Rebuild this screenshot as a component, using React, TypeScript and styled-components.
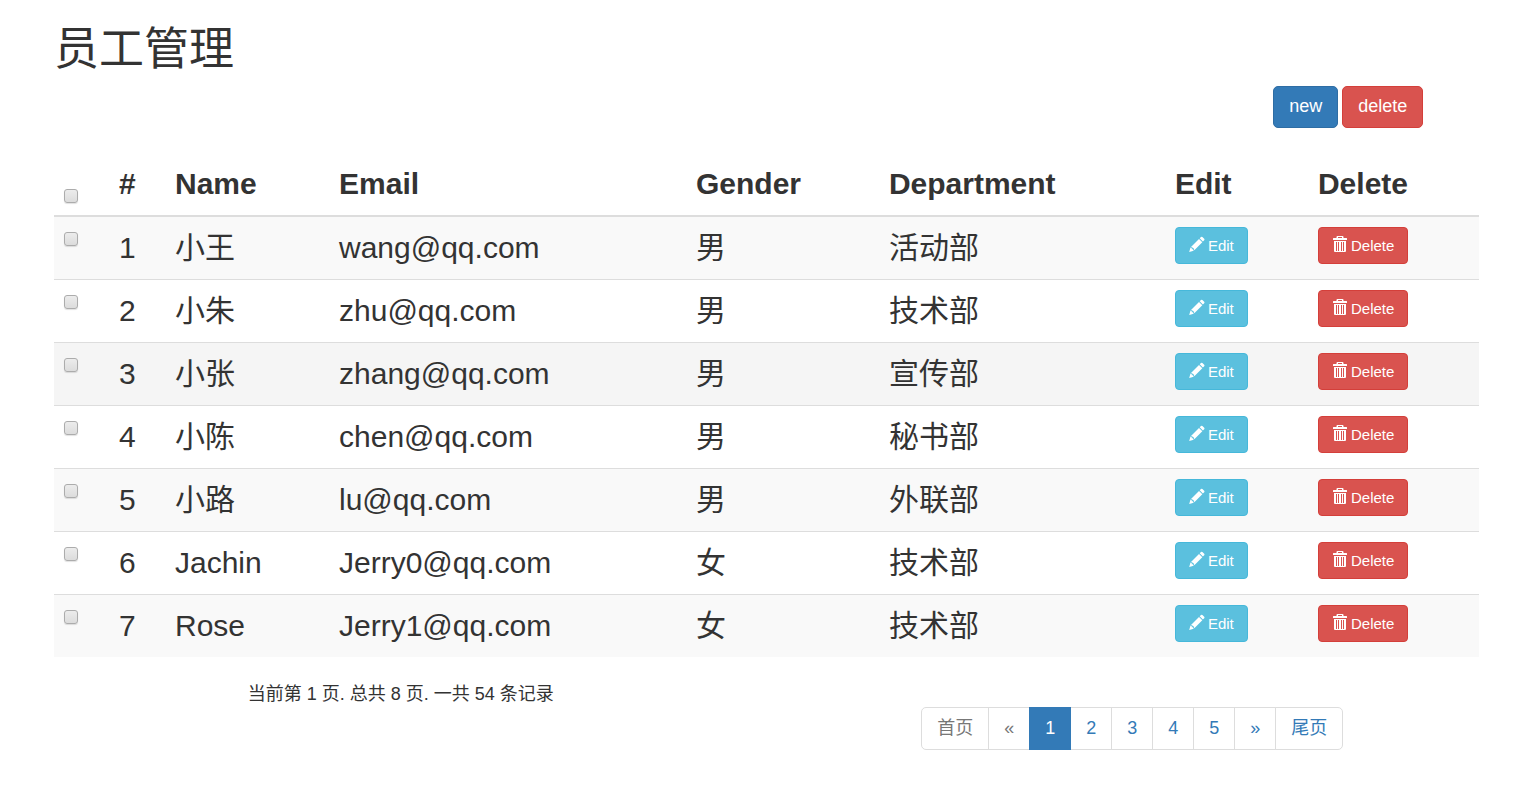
import React from "react";
import styled, { createGlobalStyle, css } from "styled-components";

const GlobalStyle = createGlobalStyle`
  *, *::before, *::after { box-sizing: border-box; }
  body {
    margin: 0;
    background: #fff;
    color: #333;
    font-family: "Liberation Sans", "Noto Sans CJK SC", sans-serif;
    font-size: 18px;
    line-height: 25px;
  }
`;

const Page = styled.main`
  padding: 24px 37px 24px 54px;
`;

const Title = styled.h1`
  margin: 0 0 10px;
  font-size: 45px;
  font-weight: 400;
  line-height: 52px;
`;

const Toolbar = styled.div`
  display: grid;
  grid-template-columns: repeat(12, minmax(0, 1fr));
  column-gap: 38px;
  margin-bottom: 24px;
`;

const ToolbarActions = styled.div`
  grid-column: 11 / span 2;
  display: flex;
  gap: 4px;
`;

const tones = {
  primary: { fill: "#337ab7", edge: "#2e6da4" },
  danger: { fill: "#d9534f", edge: "#d43f3a" },
  info: { fill: "#5bc0de", edge: "#46b8da" },
};

const Button = styled.button<{ $tone: keyof typeof tones; $small?: boolean }>`
  display: flex;
  align-items: center;
  gap: 3px;
  border: 1px solid ${(p) => tones[p.$tone].edge};
  background: ${(p) => tones[p.$tone].fill};
  color: #fff;
  font-family: inherit;
  white-space: nowrap;
  cursor: pointer;
  ${(p) =>
    p.$small
      ? css`
          padding: 6px 13px;
          border-radius: 4px;
          font-size: 15px;
          line-height: 23px;
        `
      : css`
          padding: 7px 15px 8px;
          border-radius: 5px;
          font-size: 18px;
          line-height: 25px;
        `}
`;

const Table = styled.table`
  width: 100%;
  table-layout: fixed;
  border-collapse: separate;
  border-spacing: 0;
  font-size: 30px;
  line-height: 43px;
`;

const Col = styled.col<{ $share: number }>`
  width: ${(p) => p.$share}%;
`;

const HeadCell = styled.th`
  padding: 10px;
  border-bottom: 2px solid #ddd;
  text-align: left;
  vertical-align: bottom;
`;

const Row = styled.tr<{ $hovered?: boolean }>`
  &:nth-child(odd) {
    background: ${(p) => (p.$hovered ? "#f5f5f5" : "#f9f9f9")};
  }
  &:not(:first-child) > td {
    border-top: 1px solid #ddd;
  }
`;

const Cell = styled.td`
  padding: 10px 10px 11px;
  line-height: 41px;
  vertical-align: top;
`;

const Checkbox = styled.input.attrs({ type: "checkbox" })`
  appearance: none;
  display: block;
  width: 14px;
  height: 14px;
  margin: 5px 0 2px;
  border: 1px solid #acacac;
  border-radius: 3px;
  background: linear-gradient(#ececec, #dcdcdc);
  box-shadow: 0 1px 1px rgba(0, 0, 0, 0.12);
  &:checked {
    background: #337ab7;
  }
`;

const Footer = styled.footer`
  display: grid;
  grid-template-columns: 1fr 1fr;
  column-gap: 38px;
  justify-items: center;
  padding-top: 25px;
`;

const Summary = styled.p`
  margin: 0;
`;

const Pagination = styled.ul`
  display: flex;
  margin: 25px 0 0;
  padding: 0;
  list-style: none;
`;

const PageItem = styled.li`
  & + & {
    margin-left: -1px;
  }
  &:first-child > a {
    border-radius: 5px 0 0 5px;
  }
  &:last-child > a {
    border-radius: 0 5px 5px 0;
  }
`;

const PageLink = styled.a<{ $state?: "active" | "disabled" }>`
  display: block;
  position: relative;
  z-index: ${(p) => (p.$state === "active" ? 1 : 0)};
  padding: 8px 15px;
  border: 1px solid ${(p) => (p.$state === "active" ? "#337ab7" : "#ddd")};
  background: ${(p) => (p.$state === "active" ? "#337ab7" : "#fff")};
  color: ${(p) =>
    p.$state === "active" ? "#fff" : p.$state === "disabled" ? "#777" : "#337ab7"};
  text-decoration: none;
`;

const Icon = styled.svg`
  display: block;
  width: 16px;
  height: 16px;
  flex: none;
  fill: currentColor;
  margin-bottom: 3px;
`;

const PencilIcon = () => (
  <Icon viewBox="0 0 16 16" aria-hidden="true">
    <path d="M12 1 Q12.700 0.300 13.400 1 L15.200 2.800 Q15.900 3.500 15.200 4.200 L13.900 5.500 L10.700 2.300 Z" />
    <path d="M10 2.900 L13.300 6.200 L5.300 14.200 L4.700 12.300 L3.700 12.300 L3.600 11.400 L2 10.900 Z" />
    <path d="M1.500 11.500 L2.700 12.100 L2.800 13.200 L4 13.300 L4.700 14.700 L0.200 16 Z" />
  </Icon>
);

const TrashIcon = () => (
  <Icon viewBox="0 0 16 16" aria-hidden="true">
    <path
      fillRule="evenodd"
      d="M5.5 0h5a1 1 0 0 1 1 1v1h3a.5.5 0 0 1 .5.5V4H1V2.500a.5.5 0 0 1 .5-.5h3V1a1 1 0 0 1 1-1zM6 1v1h4V1z"
    />
    <path
      fillRule="evenodd"
      d="M2 5h12v10a1 1 0 0 1-1 1H3a1 1 0 0 1-1-1zM4 6v9h1V6zM6 6v9h1V6zM9 6v9h1V6zM11 6v9h1V6z"
    />
  </Icon>
);

const columnShares = [3.86, 3.93, 11.51, 25.05, 13.54, 20.07, 10.04, 12];
const headings = ["#", "Name", "Email", "Gender", "Department", "Edit", "Delete"];

const employees = [
  { id: 1, name: "小王", email: "wang@qq.com", gender: "男", department: "活动部" },
  { id: 2, name: "小朱", email: "zhu@qq.com", gender: "男", department: "技术部" },
  { id: 3, name: "小张", email: "zhang@qq.com", gender: "男", department: "宣传部" },
  { id: 4, name: "小陈", email: "chen@qq.com", gender: "男", department: "秘书部" },
  { id: 5, name: "小路", email: "lu@qq.com", gender: "男", department: "外联部" },
  { id: 6, name: "Jachin", email: "Jerry0@qq.com", gender: "女", department: "技术部" },
  { id: 7, name: "Rose", email: "Jerry1@qq.com", gender: "女", department: "技术部" },
];

const pages: { label: string; state?: "active" | "disabled" }[] = [
  { label: "首页", state: "disabled" },
  { label: "«", state: "disabled" },
  { label: "1", state: "active" },
  { label: "2" },
  { label: "3" },
  { label: "4" },
  { label: "5" },
  { label: "»" },
  { label: "尾页" },
];

export default function App() {
  return (
    <>
      <GlobalStyle />
      <Page lang="zh-CN">
        <Title>员工管理</Title>
        <Toolbar>
          <ToolbarActions>
            <Button type="button" $tone="primary">new</Button>
            <Button type="button" $tone="danger">delete</Button>
          </ToolbarActions>
        </Toolbar>
        <Table>
          <colgroup>
            {columnShares.map((share, i) => (
              <Col key={i} $share={share} />
            ))}
          </colgroup>
          <thead>
            <tr>
              <HeadCell>
                <Checkbox aria-label="全选" />
              </HeadCell>
              {headings.map((heading) => (
                <HeadCell key={heading} scope="col">{heading}</HeadCell>
              ))}
            </tr>
          </thead>
          <tbody>
            {employees.map((e) => (
              <Row key={e.id} $hovered={e.id === 3}>
                <Cell>
                  <Checkbox aria-label={e.name} />
                </Cell>
                <Cell>{e.id}</Cell>
                <Cell>{e.name}</Cell>
                <Cell>{e.email}</Cell>
                <Cell>{e.gender}</Cell>
                <Cell>{e.department}</Cell>
                <Cell>
                  <Button type="button" $tone="info" $small>
                    <PencilIcon />
                    Edit
                  </Button>
                </Cell>
                <Cell>
                  <Button type="button" $tone="danger" $small>
                    <TrashIcon />
                    Delete
                  </Button>
                </Cell>
              </Row>
            ))}
          </tbody>
        </Table>
        <Footer>
          <Summary>当前第 1 页. 总共 8 页. 一共 54 条记录</Summary>
          <nav aria-label="分页">
            <Pagination>
              {pages.map((page) => (
                <PageItem key={page.label}>
                  <PageLink
                    href="#"
                    $state={page.state}
                    aria-current={page.state === "active" ? "page" : undefined}
                    aria-disabled={page.state === "disabled" || undefined}
                  >
                    {page.label}
                  </PageLink>
                </PageItem>
              ))}
            </Pagination>
          </nav>
        </Footer>
      </Page>
    </>
  );
}
